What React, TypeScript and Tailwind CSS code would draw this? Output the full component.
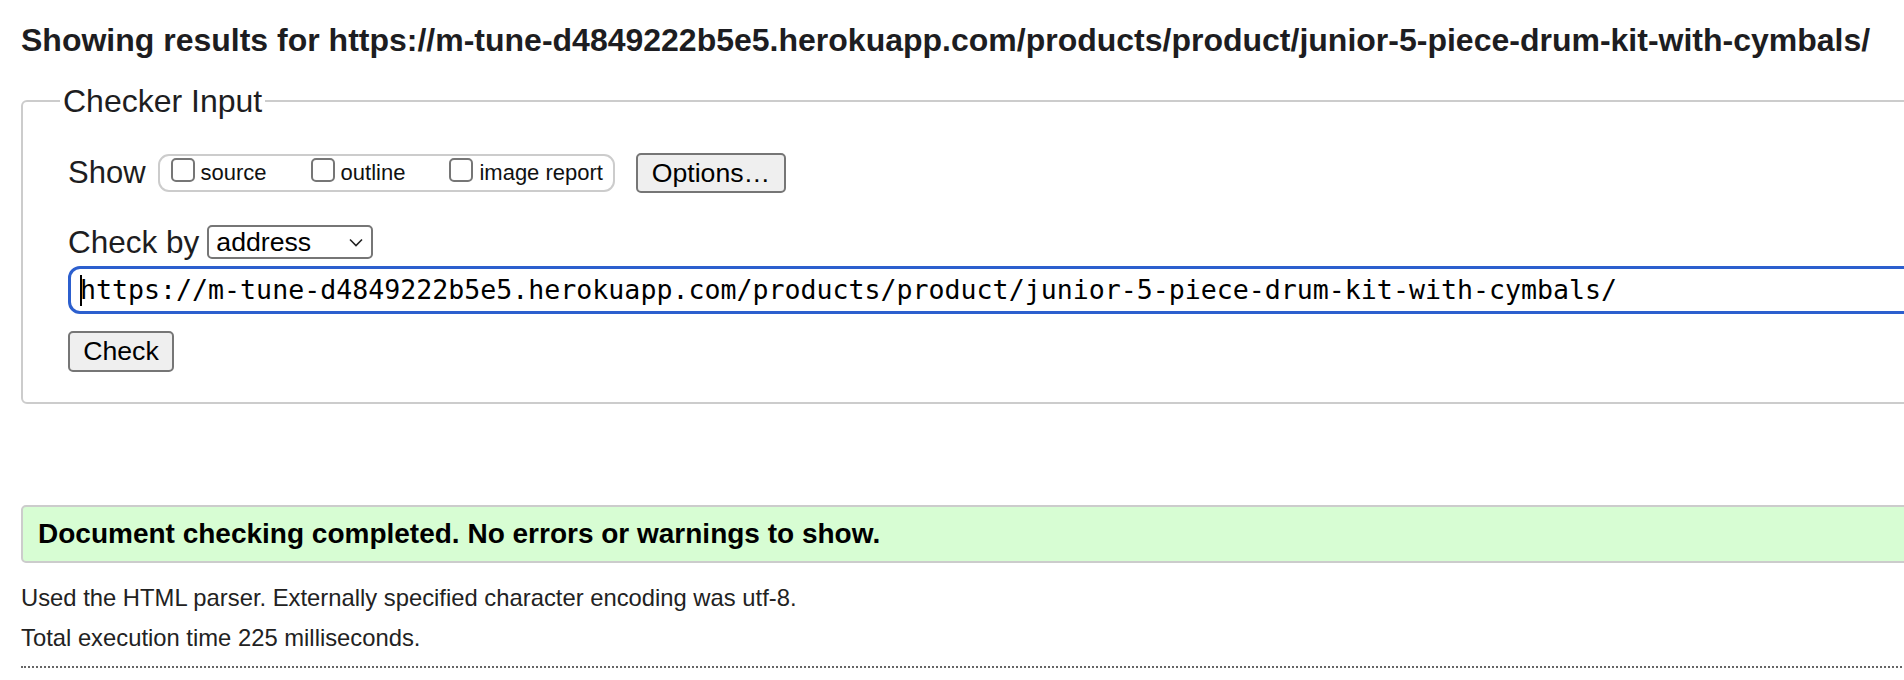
const url =
  'https://m-tune-d4849222b5e5.herokuapp.com/products/product/junior-5-piece-drum-kit-with-cymbals/'

const Checkbox: React.FC<{ label: string; last?: boolean }> = ({ label, last }) => (
  <label className={`flex items-start ${last ? 'mr-[10px]' : 'mr-[44px]'}`}>
    <span className="mt-[1px] h-[24px] w-[24px] rounded-[5px] border-2 border-[#767676] bg-white" />
    <span className="ml-[6px] mt-[4px] text-[22px] leading-[24px] text-[#111]">{label}</span>
  </label>
)

const Button: React.FC<{ children: React.ReactNode; className?: string }> = ({
  children,
  className = '',
}) => (
  <button
    className={`flex items-center justify-center rounded-[5px] border-2 border-[#767676] bg-[#efefef] text-[26.67px] leading-none text-black ${className}`}
  >
    {children}
  </button>
)

export default function App() {
  return (
    <div className="h-[680px] w-full overflow-hidden bg-white font-['Liberation_Sans',Arial,sans-serif] text-[#222]">
      <div className="w-[2100px] pl-[21px]">
        <h2 className="whitespace-nowrap pt-[20px] text-[32px] font-bold leading-[40px] text-[#1d1d21]">
          Showing results for {url}
        </h2>

        <fieldset className="mt-[24px] w-[2000px] rounded-[6px] border-2 border-[#cccccc] pb-[30px] pl-[45px]">
          <legend className="-ml-[8px] px-[3px] text-[32px] leading-[34px] text-[#1d1d21]">
            Checker Input
          </legend>

          <div className="mt-[35px] flex h-[40px] items-center">
            <span className="text-[31px] leading-[40px] text-[#1d1d21]">Show</span>
            <div className="ml-[12px] flex h-[38px] items-start rounded-[11px] border-2 border-[#cccccc] pl-[11px] pt-[1px]">
              <Checkbox label="source" />
              <Checkbox label="outline" />
              <Checkbox label="image report" last />
            </div>
            <Button className="ml-[21px] h-[40px] w-[150px]">Options…</Button>
          </div>

          <div className="mt-[32px] flex h-[34px] items-center">
            <span className="text-[31.5px] leading-[40px] text-[#1d1d21]">Check by</span>
            <div className="ml-[8px] flex h-[34px] w-[166px] items-center justify-between rounded-[5px] border-2 border-[#767676] bg-white pl-[7px] pr-[8px]">
              <span className="text-[26.67px] leading-none text-black">address</span>
              <svg width="14" height="9" viewBox="0 0 14 9" fill="none">
                <path d="M1 1.5 7 7.5 13 1.5" stroke="#222" strokeWidth="1.6" />
              </svg>
            </div>
          </div>

          <div className="mt-[7px] flex h-[48px] items-center rounded-[12px] border-[3px] border-[#2c5fce] bg-white pl-[9px]">
            <span className="mr-[-2px] h-[31px] w-[2px] bg-black" />
            <span className="whitespace-nowrap font-['DejaVu_Sans_Mono',monospace] text-[26.6px] leading-none text-black">
              {url}
            </span>
          </div>

          <Button className="mt-[17px] h-[41px] w-[106px]">Check</Button>
        </fieldset>

        <div className="mt-[101px] flex h-[58px] w-[2000px] items-center rounded-[5px] border-2 border-[#cccccc] bg-[#d7fdd3] pl-[15px]">
          <span className="text-[28px] font-bold leading-none text-black">
            Document checking completed. No errors or warnings to show.
          </span>
        </div>

        <p className="mt-[15px] text-[23.8px] leading-[40px] text-[#222]">
          Used the HTML parser. Externally specified character encoding was utf-8.
        </p>
        <p className="text-[23.8px] leading-[40px] text-[#222]">Total execution time 225 milliseconds.</p>

        <div className="mt-[8px] w-[2000px] border-t-2 border-dotted border-[#666]" />
      </div>
    </div>
  )
}
